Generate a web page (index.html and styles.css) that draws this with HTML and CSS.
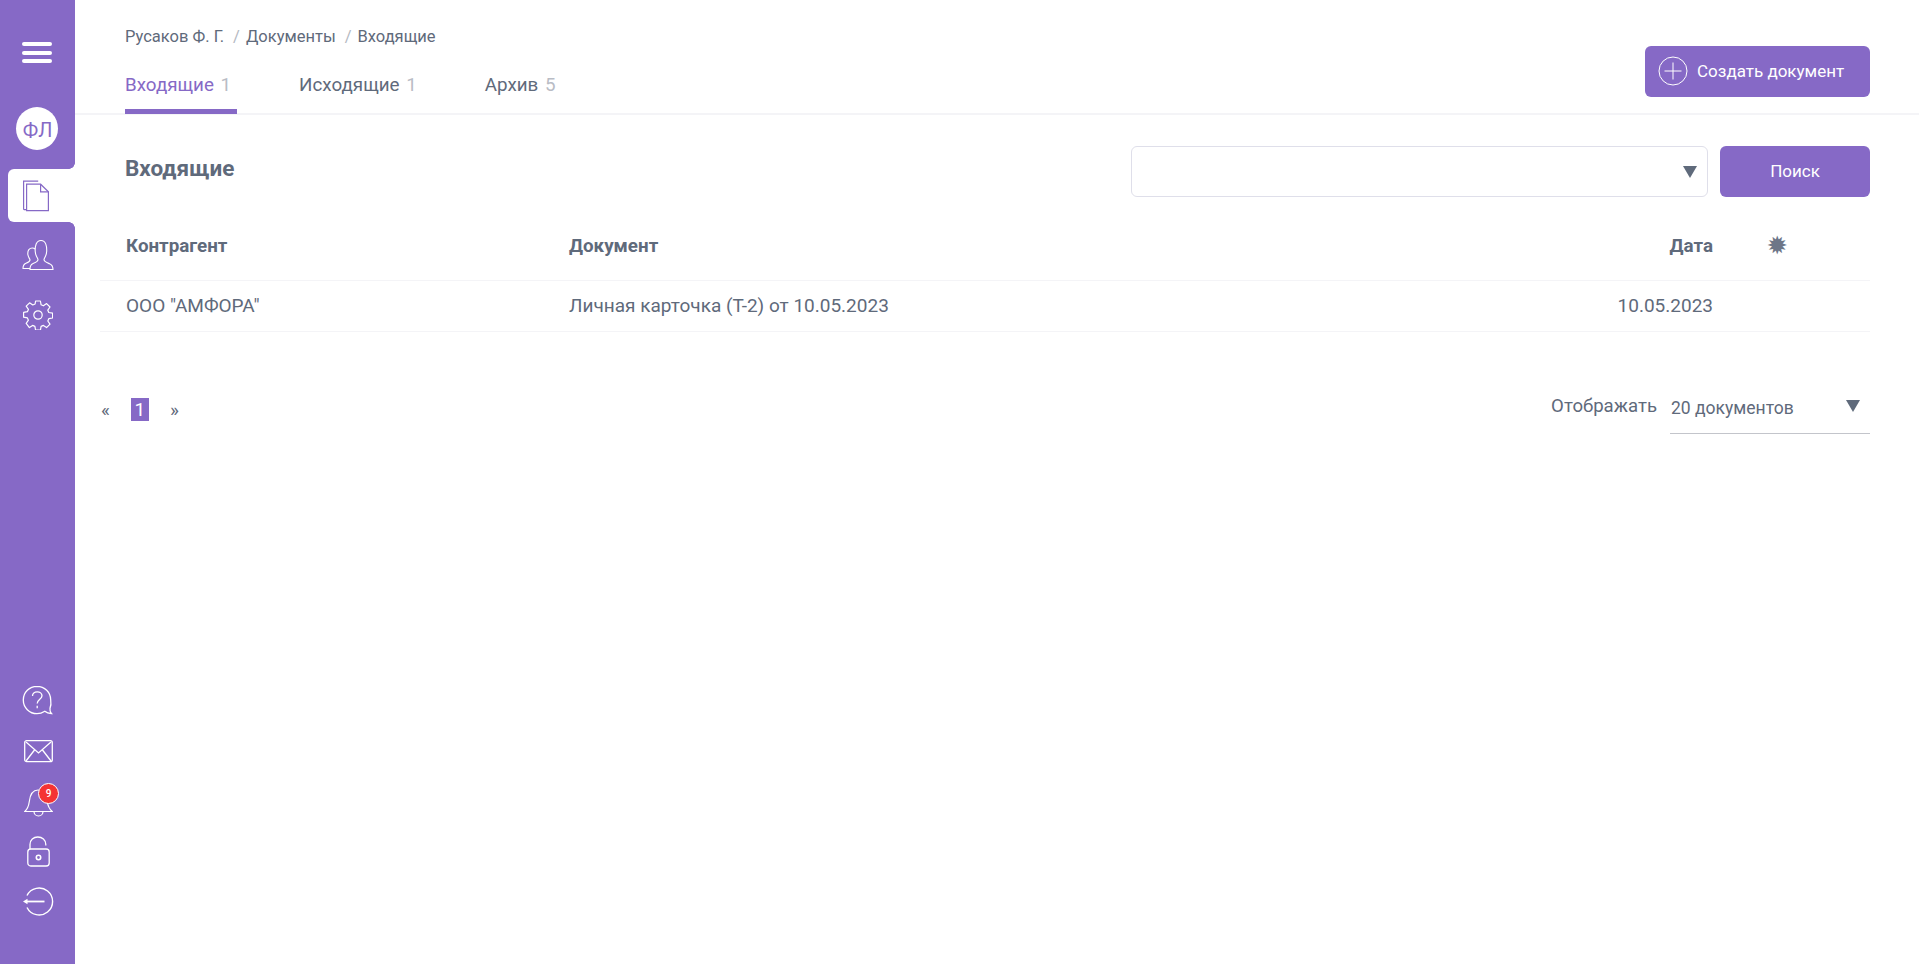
FILE: index.html
```html
<!DOCTYPE html>
<html lang="ru">
<head>
  <meta charset="UTF-8">
  <title>Документы</title>
  <link rel="stylesheet" href="styles.css">
</head>
<body>

  <!-- боковое меню -->
  <aside class="sidebar">
    <div class="sidebar-top">
      <a class="burger" href="#"><span></span><span></span><span></span></a>
      <a class="avatar" href="#">ФЛ</a>
      <a class="side-item active" href="#">
        <svg width="27" height="32" viewBox="0 0 27 32" fill="none" stroke="#8669c6" stroke-width="1.2">
          <path d="M4 29.6H1.2a.8.8 0 0 1-.6-.8V1.2h14.6"/>
          <path d="M3.6 4.2h14l7.8 7.6v18.8H3.6z"/>
          <path d="M17.6 4.2v7.6h7.8"/>
        </svg>
      </a>
      <a class="side-item" href="#">
        <svg width="32" height="32" viewBox="0 0 32 32" fill="none" stroke="#fff" stroke-width="1.1">
          <path d="M8 29.5H1c0-3 1-4.400 3-5.200 2.500-1 4-1.600 4-3.300 0-1.200-2-2.700-2.200-6-.2-3.500 1.500-6 4.500-6 1 0 2 .3 2.700 1"/>
          <path d="M8 30.500h23c0-3.500-1-4.800-3.500-5.800-3.500-1.400-5.500-2-5.500-4.200 0-1.300 2.500-3.500 2.700-8.200C24.900 7.500 24 1.500 19 1.500s-6 5.800-5.800 10.800c.2 4.700 2.800 6.900 2.800 8.200 0 2.200-2 2.800-5.300 4.200C8.200 25.700 8 27.500 8 30.500z"/>
        </svg>
      </a>
      <a class="side-item" href="#">
        <svg width="30" height="30" viewBox="0 0 30 30" fill="none" stroke="#fff" stroke-width="1.2">
          <circle cx="15" cy="15" r="4.200"/>
          <path d="M12.600 1h4.800l.7 3.800 2.300 1 3.200-2.200 3.400 3.400-2.200 3.200 1 2.300 3.800.7v4.800l-3.800.7-1 2.300 2.200 3.200-3.400 3.400-3.200-2.200-2.300 1-.7 3.800h-4.800l-.7-3.800-2.300-1-3.200 2.200L3.200 23.400l2.200-3.200-1-2.300L.6 17.200v-4.800l3.800-.7 1-2.300L3.200 6.200l3.400-3.400 3.200 2.200 2.300-1z" stroke-linejoin="round"/>
        </svg>
      </a>
    </div>
    <div class="sidebar-bottom">
      <a class="side-item" href="#">
        <svg width="32" height="32" viewBox="0 0 32 32" fill="none" stroke="#fff" stroke-width="1.3">
          <path d="M15 1.300C7.400 1.300 1.300 7.400 1.300 15S7.400 28.700 15 28.700c3 0 5.500-.9 7.800-2.400 1.500 1.300 4 2.200 6.600 2.200-1.100-1-1.700-2.800-1.400-5.300 1-2.300 1.200-5 .7-8.200C28.700 7.400 22.600 1.300 15 1.300z"/>
          <path d="M10.500 11c0-2.500 2-4.200 4.700-4.200s4.800 1.700 4.800 4c0 3.400-4.800 3.600-4.800 7.700"/>
          <path d="M15.200 20.800v2.400"/>
        </svg>
      </a>
      <a class="side-item" href="#">
        <svg width="29" height="23" viewBox="0 0 29 23" fill="none" stroke="#fff" stroke-width="1.3">
          <rect x=".7" y=".7" width="27.600" height="21" rx="2"/>
          <path d="M2 2l12.500 11L27 2M2 21l8.500-11M27 21l-8.500-11"/>
        </svg>
      </a>
      <a class="side-item bell" href="#">
        <svg width="29" height="32" viewBox="0 0 29 32" fill="none" stroke="#fff" stroke-width="1.200">
          <path d="M.8 26.500c2.800-2.500 3.900-5.500 4.500-10C6 10.500 8.500 5 14 5c6 0 8.500 5.500 9.300 11.500.5 4.500 2 7.500 4.900 10z"/>
          <path d="M10 26.500c0 2.500 2 4.500 4.500 4.500s4.500-2 4.500-4.500"/>
        </svg>
        <span class="badge">9</span>
      </a>
      <a class="side-item" href="#">
        <svg width="23" height="31" viewBox="0 0 23 31" fill="none" stroke="#fff" stroke-width="1.300">
          <rect x=".8" y="13" width="21.400" height="17" rx="3"/>
          <path d="M3 13V8.500C3 4 6.500 1 10.800 1c4.400 0 8 3 8 7.500v1"/>
          <circle cx="11.500" cy="21.500" r="2.200" stroke-width="1.600"/>
        </svg>
      </a>
      <a class="side-item" href="#">
        <svg width="31" height="29" viewBox="0 0 31 29" fill="none" stroke="#fff" stroke-width="1.400">
          <path d="M4 8.500a13.500 13.500 0 1 1 0 12"/>
          <path d="M4 14.500h17.500" stroke-width="1.800"/>
          <path d="M0 14.500l4.500-2.800v5.600z" fill="#fff" stroke="none"/>
        </svg>
      </a>
    </div>
  </aside>

  <div class="main">
    <header class="top">
      <div>
        <div class="crumbs">
          <a href="#">Русаков Ф. Г.</a><i>/</i><a href="#">Документы</a><i>/</i><a href="#">Входящие</a>
        </div>
        <nav class="tabs">
          <a class="tab active" href="#">Входящие <b>1</b></a>
          <a class="tab" href="#">Исходящие <b>1</b></a>
          <a class="tab" href="#">Архив <b>5</b></a>
        </nav>
      </div>
      <button class="btn btn-create">
        <svg width="30" height="30" viewBox="0 0 30 30" fill="none" stroke="#fff" stroke-width="1">
          <circle cx="15" cy="15" r="14"/>
          <path d="M15 6.500v17M6.500 15h17"/>
        </svg>
        Создать документ
      </button>
    </header>

    <section class="content">
      <div class="content-head">
        <h2>Входящие</h2>
        <div class="filter">
          <div class="filter-select"><span class="arrow"></span></div>
          <button class="btn btn-search">Поиск</button>
        </div>
      </div>

      <table class="docs">
        <thead>
          <tr>
            <th class="col-agent">Контрагент</th>
            <th>Документ</th>
            <th class="col-date">Дата</th>
            <th class="col-mark"><span class="mark">✹</span></th>
          </tr>
        </thead>
        <tbody>
          <tr>
            <td>ООО "АМФОРА"</td>
            <td>Личная карточка (Т-2) от 10.05.2023</td>
            <td class="col-date">10.05.2023</td>
            <td></td>
          </tr>
        </tbody>
      </table>

      <div class="table-foot">
        <div class="pager">
          <a href="#">«</a>
          <a class="current" href="#">1</a>
          <a href="#">»</a>
        </div>
        <div class="per-page">
          <span>Отображать</span>
          <div class="per-select">20 документов<span class="arrow"></span></div>
        </div>
      </div>
    </section>
  </div>

</body>
</html>
```

FILE: styles.css
```css
* { box-sizing: border-box; margin:0; padding:0; }
html, body { height:100%; }
body {
  display:flex; min-height:964px; overflow:hidden;
  font-family: Roboto, "Noto Sans", sans-serif;
  color:#5f6a7b; background:#fff;
}
a { color:inherit; text-decoration:none; }

/* боковое меню */
.sidebar {
  width:75px; flex:none; background:#8669c6;
  display:flex; flex-direction:column; justify-content:space-between;
  padding-bottom:38px;
}
.sidebar-top, .sidebar-bottom { display:flex; flex-direction:column; }
.burger {
  display:flex; flex-direction:column; gap:4.5px;
  width:30px; margin:42px 0 0 22px;
}
.burger span { height:4px; border-radius:2px; background:#fff; }
.avatar {
  width:42px; height:43px; margin:44px 0 19px 16px; padding:2px 0 0 1px; border-radius:50%;
  background:#fff; color:#8669c6; font-size:20px;
  display:flex; align-items:center; justify-content:center;
}
.side-item {
  display:flex; align-items:center; justify-content:center;
  position:relative; height:50px; padding-left:1px;
}
.sidebar-top .side-item { height:60px; }
.sidebar-top .side-item.active {
  height:53px; margin:0 0 3px 8px; padding-right:11px; background:#fff;
  border-radius:6px 0 0 6px;
}
/* вогнутые углы над и под активным пунктом */
.side-item.active::before, .side-item.active::after {
  content:""; position:absolute; right:0; width:6px; height:6px;
  background:radial-gradient(circle at 0 0, #8669c6 5.5px, #fff 6px);
}
.side-item.active::before { top:-6px; }
.side-item.active::after {
  bottom:-6px;
  background:radial-gradient(circle at 0 100%, #8669c6 5.500px, #fff 6px);
}
.badge {
  position:absolute; left:38px; top:7px;
  width:21px; height:21px; border-radius:50%;
  background:#f53333; color:#fff; border:1px solid #fff;
  font-size:10px; font-weight:500;
  display:flex; align-items:center; justify-content:center;
}

/* шапка */
.main { flex:1; min-width:0; }
.top {
  height:115px; padding:0 49px 0 50px;
  border-bottom:2px solid #f4f4f7;
  display:flex; justify-content:space-between; align-items:flex-start;
}
.crumbs { padding-top:27px; font-size:16.500px; line-height:20px; }
.crumbs i { font-style:normal; color:#b5b9c2; margin:0 6px 0 9px; }
.tabs { display:flex; gap:62px; margin-top:14px; }
.tab { display:block; padding:0 6px 0 0; height:53px; line-height:49px; font-size:18.800px; border-bottom:5px solid transparent; }
.tab b { font-weight:400; color:#b9bcc5; margin-left:2px; }
.tab.active { color:#8669c6; border-color:#8669c6; }

.btn {
  border:none; border-radius:6px; background:#8669c6; color:#fff;
  font-family:inherit; font-size:17px; cursor:pointer;
}
.btn-create {
  width:225px; height:51px; margin-top:46px; padding:0 0 2px 13px;
  display:flex; align-items:center; gap:9px;
}

/* контент */
.content { padding:31px 49px 0 25px; }
.content-head { display:flex; justify-content:space-between; align-items:flex-start; padding-left:25px; }
.content-head h2 { font-size:22.500px; font-weight:700; line-height:28px; margin-top:8px; }
.filter { display:flex; gap:12px; }
.filter-select {
  width:577px; height:51px; border:1px solid #dfdfea; border-radius:6px;
  display:flex; align-items:center; justify-content:flex-end; padding-right:10px;
}
.btn-search { width:150px; height:51px; padding-bottom:2px; }
.arrow {
  display:block; width:0; height:0;
  border-left:7px solid transparent; border-right:7px solid transparent;
  border-top:12px solid #5f6a7b;
}

.docs { width:100%; border-collapse:collapse; table-layout:fixed; margin-top:18px; font-size:18.800px; }
.docs th { height:65px; text-align:left; font-weight:700; padding:0 0 3px 0; }
.docs td { height:51px; font-size:19px; border-top:1px solid #f4f4f7; border-bottom:1px solid #f4f4f7; }
.docs th:first-child, .docs td:first-child { padding-left:26px; }
.col-agent { width:469px; }
.docs .col-date { text-align:right; }
.docs .col-mark { width:157px; text-align:left; padding-left:55px; }
.mark { font-size:22px; color:#6e7688; }

.table-foot { display:flex; justify-content:space-between; align-items:flex-start; margin-top:51px; }
.pager { display:flex; align-items:center; gap:21px; padding:15px 0 0 1px; font-size:19px; }
.pager .current {
  width:18px; height:23px; background:#8669c6; color:#fff; font-size:19px;
  display:flex; align-items:center; justify-content:center;
}
.per-page { display:flex; align-items:center; gap:13px; font-size:18.600px; }
.per-page > span { margin-bottom:4px; }
.per-select {
  width:200px; height:51px; border-bottom:1px solid #c3c5cb;
  display:flex; justify-content:space-between; align-items:center;
  padding:0 10px 0 1px; font-size:17.500px;
}
.per-select .arrow { margin-top:-4px; }
```
